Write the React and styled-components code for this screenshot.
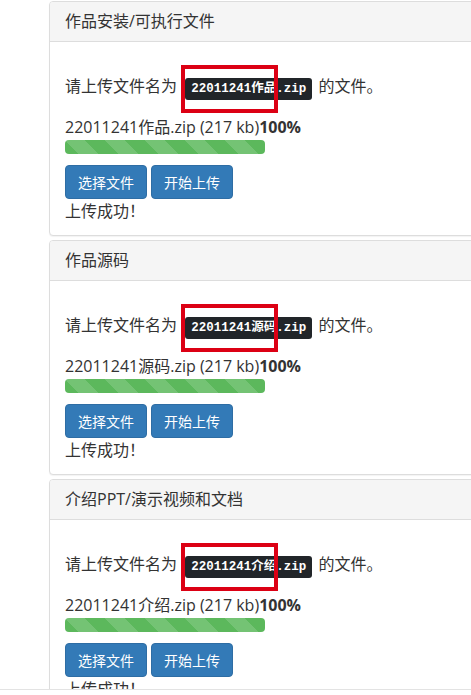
import React from 'react'
import styled, { createGlobalStyle } from 'styled-components'

const GlobalStyle = createGlobalStyle`
    html, body
    {
        margin: 0;
        padding: 0;
        background: #fff;
        overflow: hidden;
        height: 100%;
    }
    body
    {
        font-family: "Open Sans", "Noto Sans CJK SC", sans-serif;
        font-size: 16px;
        color: #333;
    }
`
const Page = styled.div`
    padding: 1px 0 0 49px;
    width: 760px;
`
const Panel = styled.div`
    width: 720px;
    background: #fff;
    border: 1px solid #ddd;
    border-radius: 4px;
    box-shadow: 0 1px 1px rgba(0, 0, 0, 0.05);
    margin-bottom: 4px;
`
const PanelHeading = styled.div`
    height: 39px;
    line-height: 39px;
    padding: 0 15px;
    background: #f5f5f5;
    border-bottom: 1px solid #ddd;
    border-radius: 3px 3px 0 0;
`
const PanelBody = styled.div`
    padding: 15px 15px 14px;
`
const Instruction = styled.p`
    margin: 16px 0 0;
    line-height: 26px;
`
const Kbd = styled.kbd`
    position: relative;
    font-family: "Liberation Mono", "Noto Sans CJK SC", monospace;
    font-weight: 700;
    font-size: 12.5px;
    line-height: 1;
    color: #fff;
    background: #212529;
    padding: 4px 6px;
    border-radius: 3px;
    margin: 0 2px 0 4px;
`
const Marker = styled.span`
    position: absolute;
    left: -4px;
    top: -13px;
    width: 97px;
    height: 48px;
    box-sizing: border-box;
    border: 4px solid #dc0014;
`
const FileLine = styled.p`
    margin: 17px 0 0;
    line-height: 22px;
    b
    {
        font-weight: 700;
    }
`
const Progress = styled.div`
    margin-top: 2px;
    width: 200px;
    height: 14px;
    border-radius: 4px;
    overflow: hidden;
    background: #f5f5f5;
`
const ProgressBar = styled.div`
    height: 100%;
    background-color: #5cb85c;
    background-image: linear-gradient(45deg, rgba(255,255,255,.15) 25%, transparent 25%, transparent 50%, rgba(255,255,255,.15) 50%, rgba(255,255,255,.15) 75%, transparent 75%, transparent);
    background-size: 40px 40px;
`
const Buttons = styled.div`
    display: flex;
    gap: 4px;
    margin-top: 11px;
`
const Button = styled.button`
    height: 34px;
    padding: 0 12px;
    font-family: inherit;
    font-size: 14px;
    color: #fff;
    background: #337ab7;
    border: 1px solid #2e6da4;
    border-radius: 4px;
    cursor: pointer;
`
const Success = styled.p`
    margin: 2px 0 0;
    line-height: 20px;
`
const BottomEdge = styled.div`
    position: fixed;
    left: 0;
    right: 0;
    top: 689px;
    bottom: 0;
    background: #fff;
    border-top: 1px solid #e3e3e3;
`

const uploads = [
    { title: '作品安装/可执行文件', name: '作品' },
    { title: '作品源码', name: '源码' },
    { title: '介绍PPT/演示视频和文档', name: '介绍' },
]

function UploadPanel({ title, name }) {
    return (
        <Panel>
            <PanelHeading>{title}</PanelHeading>
            <PanelBody>
                <Instruction>
                    请上传文件名为 <Kbd>22011241{name}.zip<Marker /></Kbd> 的文件。
                </Instruction>
                <FileLine>22011241{name}.zip (217 kb)<b>100%</b></FileLine>
                <Progress>
                    <ProgressBar style={{ width: '100%' }} />
                </Progress>
                <Buttons>
                    <Button>选择文件</Button>
                    <Button>开始上传</Button>
                </Buttons>
                <Success>上传成功！</Success>
            </PanelBody>
        </Panel>
    )
}

export default function App() {
    return (
        <>
            <GlobalStyle />
            <Page>
                {uploads.map(u => <UploadPanel key={u.name} {...u} />)}
            </Page>
            <BottomEdge />
        </>
    )
}
